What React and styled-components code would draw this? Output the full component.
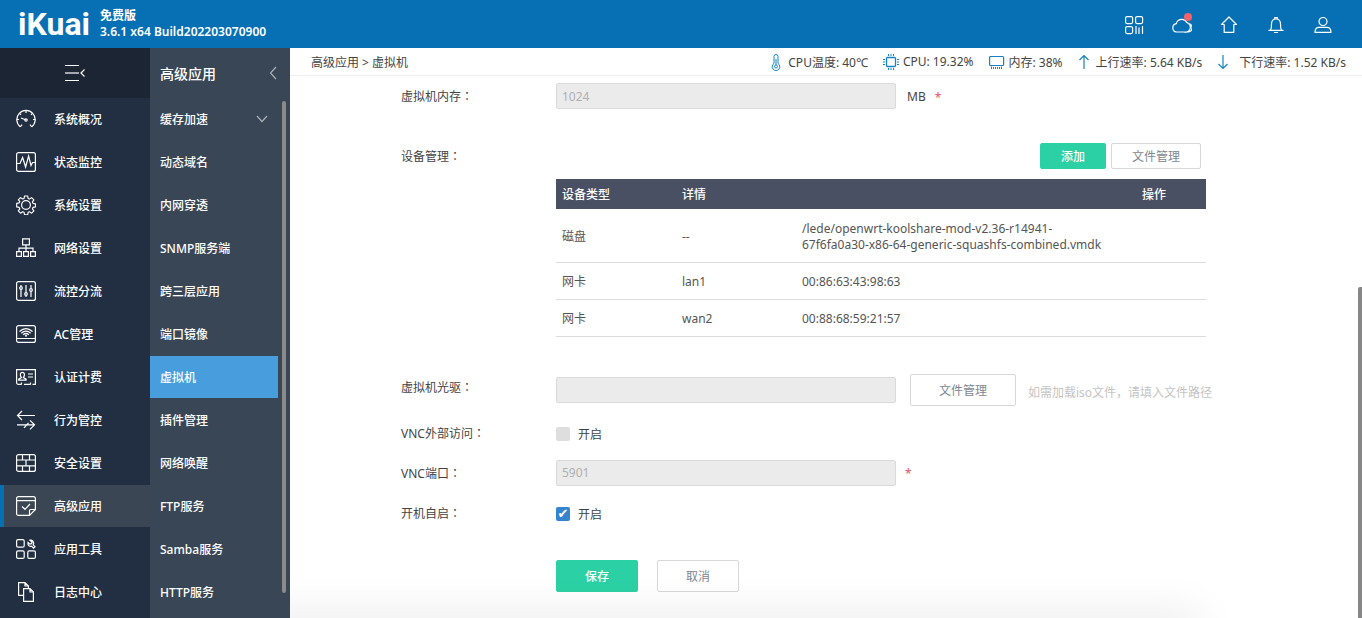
import React from "react";
import styled, { createGlobalStyle } from "styled-components";

const GlobalStyle = createGlobalStyle`
  *, *::before, *::after { box-sizing: border-box; }
  html, body { margin: 0; height: 100%; overflow: hidden; }
  #root { height: 100%; }
  body, button, input {
    font-family: "Noto Sans", "Noto Sans CJK SC", sans-serif;
    font-size: 12px;
    color: #444;
  }
  button { cursor: pointer; }
  a { color: inherit; text-decoration: none; }
`;

const Page = styled.div`
  display: flex;
  flex-direction: column;
  height: 100vh;
  overflow: hidden;
  background: #fff;
`;

const Header = styled.header`
  display: flex;
  align-items: center;
  flex: none;
  height: 48px;
  padding: 0 29px 0 18px;
  background: #0770b5;
  color: #fff;
`;

const Brand = styled.div`
  width: 82px;
  font: 700 32px/48px "Roboto", sans-serif;
`;

const Version = styled.div`
  flex: 1;
  font-size: 12px;
  font-weight: 600;
  line-height: 16px;
`;

const HeaderTools = styled.nav`
  display: flex;
  gap: 27px;
  padding-top: 2px;
`;

const IconButton = styled.button`
  position: relative;
  display: flex;
  padding: 0;
  border: 0;
  background: none;
  color: inherit;
`;

const Dot = styled.span`
  position: absolute;
  top: -2px;
  right: 0;
  width: 8px;
  height: 8px;
  border-radius: 50%;
  background: #f4606c;
`;

const Body = styled.div`
  display: flex;
  flex: 1;
  min-height: 0;
`;

const Sidebar = styled.nav`
  flex: none;
  width: 150px;
  background: #222f42;
  color: #fff;
  overflow: hidden;
`;

const Collapse = styled.button`
  display: flex;
  align-items: center;
  justify-content: center;
  width: 100%;
  height: 50px;
  padding: 0;
  border: 0;
  background: #1b2534;
  color: #fff;
`;

const Menu = styled.ul`
  display: flex;
  flex-direction: column;
  gap: 1px;
  margin: 0;
  padding: 0;
  list-style: none;
`;

const MainLink = styled.a`
  display: flex;
  align-items: center;
  gap: 18px;
  height: 42px;
  padding-left: 12px;
  border-left: 4px solid ${(p) => (p.$active ? "#0770b5" : "transparent")};
  background: ${(p) => (p.$active ? "#3a4654" : "transparent")};
  font-weight: 500;
`;

const SubPanel = styled.nav`
  position: relative;
  flex: none;
  width: 140px;
  background: #394655;
  color: #fff;
  overflow: hidden;
`;

const SubTitle = styled.div`
  display: flex;
  align-items: center;
  justify-content: space-between;
  height: 50px;
  padding: 0 13px 0 10px;
  font-size: 14px;
  font-weight: 500;
`;

const SubLink = styled.a`
  display: flex;
  align-items: center;
  justify-content: space-between;
  height: 42px;
  margin-right: 12px;
  padding: 0 10px;
  background: ${(p) => (p.$active ? "#489edd" : "transparent")};
  font-weight: 500;
`;

const SubScrollThumb = styled.div`
  position: absolute;
  top: 53px;
  right: 4px;
  bottom: 25px;
  width: 4px;
  border-radius: 2px;
  background: #8b8b8b;
`;

const Main = styled.main`
  position: relative;
  display: flex;
  flex-direction: column;
  flex: 1;
  min-width: 0;
  overflow: hidden;
`;

const StatusBar = styled.div`
  display: flex;
  align-items: center;
  justify-content: space-between;
  flex: none;
  height: 28px;
  padding: 0 16px 0 21px;
  border-bottom: 1px solid #efefef;
  white-space: nowrap;
`;

const StatusList = styled.div`
  display: flex;
  gap: 15px;
`;

const StatusItem = styled.span`
  display: flex;
  align-items: center;
  gap: ${(p) => p.$gap}px;
  svg { color: #1583c4; }
`;

const Form = styled.form`
  padding: 7px 0 26px 111px;
`;

const Row = styled.div`
  display: grid;
  grid-template-columns: 155px 1fr;
  margin-bottom: ${(p) => p.$space || 14}px;
`;

const Label = styled.label`
  height: 26px;
  line-height: 26px;
`;

const Colon = styled.span`
  font-family: "Noto Sans CJK TC", sans-serif;
`;

const Field = styled.div`
  display: flex;
  align-items: center;
  min-height: 26px;
`;

const TextInput = styled.input`
  width: 340px;
  height: 26px;
  padding: 0 5px;
  border: 1px solid #dadada;
  border-radius: 2px;
  background: #ebebeb;
  color: #b0b0b0;
`;

const Unit = styled.span`
  margin-left: 11px;
`;

const Star = styled.span`
  margin-left: 9px;
  padding-top: 2px;
  color: #e8525e;
`;

const Hint = styled.span`
  margin-left: 12px;
  padding-top: 4px;
  color: #c4c4c4;
`;

const Button = styled.button`
  width: ${(p) => p.$width}px;
  height: ${(p) => (p.$small ? 26 : 32)}px;
  padding: 0;
  border: 1px solid ${(p) => (p.$primary ? "#2bd1a4" : "#d8d8d8")};
  border-radius: 2px;
  background: ${(p) => (p.$primary ? "#2bd1a4" : "#fff")};
  color: ${(p) => (p.$primary ? "#fff" : "#7d8791")};
  font-weight: ${(p) => (p.$primary ? 500 : 400)};
`;

const FileButton = styled(Button)`
  margin-left: 14px;
`;

const DevicePanel = styled.div`
  width: 650px;
`;

const DeviceTools = styled.div`
  display: flex;
  justify-content: flex-end;
  gap: 5px;
  margin-bottom: 10px;
  padding-right: 5px;
`;

const Table = styled.table`
  width: 100%;
  border-collapse: collapse;
  table-layout: fixed;
  line-height: 16px;
  th, td { padding: 2px 6px 0; text-align: left; }
  th { height: 30px; background: #4a5064; color: #fff; font-weight: 500; }
  td { height: 37px; border-bottom: 1px solid #dcdcdc; color: #555; }
  td:nth-child(3) { padding-right: 22px; }
  tbody tr:first-child td { height: 53px; padding-top: 3px; }
`;

const Col = styled.col`
  width: ${(p) => p.$width}px;
`;

const CheckLabel = styled.label`
  display: flex;
  align-items: center;
  gap: 8px;
  padding-top: 2px;
`;

const CheckBox = styled.input`
  appearance: none;
  display: grid;
  place-items: center;
  width: 14px;
  height: 14px;
  margin: 0;
  border-radius: 2px;
  background: #dedede;
  &:checked { background: #3584cf; }
  &:checked::after {
    content: "✔";
    color: #fff;
    font: 13px/14px "DejaVu Sans", sans-serif;
  }
`;

const Actions = styled.div`
  display: flex;
  gap: 19px;
  margin: 34px 0 0 155px;
`;

const PageScrollThumb = styled.div`
  position: absolute;
  right: 0;
  bottom: 0;
  width: 4px;
  height: 58%;
  border-radius: 2px 0 0 0;
  background: #878787;
`;

const BottomShade = styled.div`
  position: absolute;
  left: -40px;
  right: 162px;
  bottom: -12px;
  height: 12px;
  box-shadow: 0 0 40px rgba(0, 0, 0, 0.18);
  pointer-events: none;
`;

const Icon = ({ w = 20, h = 20, children, ...rest }) => (
  <svg
    width={w}
    height={h}
    viewBox={`0 0 ${w} ${h}`}
    fill="none"
    stroke="currentColor"
    strokeWidth="1.2"
    aria-hidden="true"
    {...rest}
  >
    {children}
  </svg>
);

const icons = {
  gauge: (
    <Icon>
      <path d="M4.200 17.800 6.100 15.600M15.800 17.800 13.900 15.600M4.200 17.800A9.200 9.200 0 1 1 15.800 17.800" />
      <path d="M10 1.500V4M3.600 4.400 5 5.800M16.400 4.400 15 5.800M.8 10.500H3M17 10.500H19.200M5 9 9.400 10.700" />
      <circle cx="10" cy="11" r="1.200" />
    </Icon>
  ),
  monitor: (
    <Icon>
      <rect x=".6" y=".6" width="18.800" height="18.800" rx="2" />
      <path d="M1 11.500H4L6.600 5.500 9.600 15 12.600 4 15 13.500 16.500 10.500H19" />
    </Icon>
  ),
  gear: (
    <Icon strokeLinejoin="round">
      <circle cx="10" cy="10" r="4.400" />
      <path d="M8.4.7h3.2l.5 2.6 1.5.6 2.2-1.5 2.3 2.3-1.5 2.2.6 1.5 2.6.5v3.2l-2.6.5-.6 1.5 1.5 2.2-2.3 2.3-2.2-1.5-1.5.6-.5 2.6H8.4l-.5-2.6-1.5-.6-2.2 1.5-2.3-2.3 1.5-2.2-.6-1.5-2.6-.5V8.400l2.600-.5.6-1.500L1.900 4.700 4.200 2.400 6.400 3.900 7.900 3.300Z" transform="translate(.5 .3) scale(.96)" />
    </Icon>
  ),
  network: (
    <Icon>
      <path d="M6.600.8H13.400V6.800H6.600ZM.6 13.600H5.400V18.400H.6ZM7.600 13.600H12.400V18.400H7.600ZM14.600 13.600H19.400V18.400H14.600ZM10 6.800V13.600M3 13.600V10.200H17V13.600" />
    </Icon>
  ),
  sliders: (
    <Icon>
      <rect x=".6" y=".6" width="18.800" height="18.800" rx="2" />
      <path d="M5 4V5.500M5 8.500V16M10 4V11.500M10 14.500V16M15 4V7.500M15 10.500V16" />
      <circle cx="5" cy="7" r="1.300" />
      <circle cx="10" cy="13" r="1.300" />
      <circle cx="15" cy="9" r="1.300" />
    </Icon>
  ),
  ac: (
    <Icon>
      <rect x=".6" y="1.600" width="18.800" height="16.800" rx="2" />
      <path d="M.6 14.500H19.400M3.500 7.500Q10 1.800 16.500 7.500M5.300 9.200Q10 5 14.700 9.200M7.200 10.800Q10 8.200 12.800 10.800" />
      <circle cx="10" cy="11.800" r="1" fill="currentColor" stroke="none" />
    </Icon>
  ),
  card: (
    <Icon>
      <path d="M5.500 17.400H2.600Q.6 17.400.6 15.400V2.600H19.400V17.400H16.500M5.500 15.500V17.400M14.500 15.500V17.400M8 17.400H14.500M12 7H17M12 10H17" />
      <path d="M2.700 13.200V12.200L5.400 10.600Q4 8.900 4.400 7 4.800 5.400 6.400 5.400 8 5.400 8.400 7 8.700 8.900 7.400 10.600L10.100 12.200V13.200Z" />
    </Icon>
  ),
  behavior: (
    <Icon>
      <path d="M6 1 1.500 5.500 6 10M1.500 5.500H19M1 14.800H18.500M14 10.300 18.500 14.800 14 19.300M8 17.800 12.500 12.800" />
    </Icon>
  ),
  wall: (
    <Icon>
      <rect x=".6" y="1.600" width="18.800" height="16.800" rx="2" />
      <path d="M.6 7H19.400M.6 12.800H19.400M6.500 1.600V7M13.500 1.600V7M10 7V12.800M6.500 12.800V18.400M13.500 12.800V18.400" />
    </Icon>
  ),
  advanced: (
    <Icon>
      <path d="M13.500 19.400H2.600Q.6 19.400.6 17.400V2.600Q.6.6 2.600.6H17.400Q19.400.6 19.400 2.600V13.500L13.500 19.400V14.500Q13.500 13.500 14.500 13.500H19.400M.6 4.600H19.400M6 10.500 9 13.300 14 8" />
    </Icon>
  ),
  tools: (
    <Icon>
      <rect x=".6" y=".6" width="7.600" height="7.600" rx="1.500" />
      <rect x=".6" y="11.800" width="7.600" height="7.600" rx="1.500" />
      <rect x="11.800" y="11.800" width="7.600" height="7.600" rx="1.500" />
      <path d="M14 1.200 16 3 15.500 4.700 13.800 5.200 12 3.500Q11.500 5.800 13.300 7 14.500 7.700 15.600 7.200L17.500 9.200 19 7.700 17.200 5.800Q18.200 3.600 16.800 2 15.700.800 14 1.200Z" />
    </Icon>
  ),
  logs: (
    <Icon>
      <path d="M7 13.400H2.600V.6H9L12.400 4V6M9 .6V4H12.400M7.600 6.600H14L17.400 10V19.400H7.600ZM14 6.600V10H17.400" />
    </Icon>
  ),
};

const mainMenu = [
  ["系统概况", "gauge"],
  ["状态监控", "monitor"],
  ["系统设置", "gear"],
  ["网络设置", "network"],
  ["流控分流", "sliders"],
  ["AC管理", "ac"],
  ["认证计费", "card"],
  ["行为管控", "behavior"],
  ["安全设置", "wall"],
  ["高级应用", "advanced"],
  ["应用工具", "tools"],
  ["日志中心", "logs"],
];

const subMenu = [
  "缓存加速",
  "动态域名",
  "内网穿透",
  "SNMP服务端",
  "跨三层应用",
  "端口镜像",
  "虚拟机",
  "插件管理",
  "网络唤醒",
  "FTP服务",
  "Samba服务",
  "HTTP服务",
];

const devices = [
  ["磁盘", "--", "/lede/openwrt-koolshare-mod-v2.36-r14941-67f6fa0a30-x86-64-generic-squashfs-combined.vmdk"],
  ["网卡", "lan1", "00:86:63:43:98:63"],
  ["网卡", "wan2", "00:88:68:59:21:57"],
];

const statuses = [
  {
    text: "CPU温度: 40℃",
    gap: 6,
    icon: (
      <Icon w={12} h={18} strokeWidth="1">
        <path d="M4 10.500V3.500A2 2 0 0 1 8 3.500V10.500A3.800 3.800 0 1 1 4 10.500ZM6 6V12" />
        <circle cx="6" cy="13.500" r="1.500" />
      </Icon>
    ),
  },
  {
    text: "CPU: 19.32%",
    gap: 4,
    icon: (
      <Icon w={16} h={18} strokeWidth="1">
        <rect x="3.500" y="4.500" width="9" height="9" rx="1" strokeWidth="1.300" />
        <path d="M5.500 1V3M8 1V3M10.500 1V3M5.500 15V17M8 15V17M10.500 15V17M0 6.500H2M0 9H2M0 11.500H2M14 6.500H16M14 9H16M14 11.500H16" />
      </Icon>
    ),
  },
  {
    text: "内存: 38%",
    gap: 4,
    icon: (
      <Icon w={16} h={16} strokeWidth="1">
        <rect x=".600" y="2.500" width="14" height="9" rx="1" strokeWidth="1.200" />
        <path d="M2.500 12.500V15M4.500 13V15M6.500 13V15M8.500 13V15M10.500 13V15M12.500 12.500V15" />
      </Icon>
    ),
  },
  {
    text: "上行速率: 5.64 KB/s",
    gap: 6,
    icon: (
      <Icon w={12} h={16}>
        <path d="M6 15V1.500M1.500 6 6 1.500 10.500 6" />
      </Icon>
    ),
  },
  {
    text: "下行速率: 1.52 KB/s",
    gap: 10,
    icon: (
      <Icon w={12} h={16}>
        <path d="M6 1V14.500M1.500 10 6 14.500 10.500 10" />
      </Icon>
    ),
  },
];

export default function App() {
  return (
    <Page>
      <GlobalStyle />
      <Header>
        <Brand>iKuai</Brand>
        <Version>
          免费版
          <br />
          3.6.1 x64 Build202203070900
        </Version>
        <HeaderTools>
          <IconButton aria-label="应用">
            <Icon>
              <rect x=".6" y="1.600" width="7" height="7" rx="1.500" />
              <rect x="10.600" y="1.600" width="7" height="7" rx="1.500" />
              <rect x=".6" y="11.600" width="7" height="7" rx="1.500" />
              <path d="M11 11V19M14 12.500V19M17.500 11V19" />
            </Icon>
          </IconButton>
          <IconButton aria-label="云">
            <Icon>
              <path d="M4.500 17A4.200 4.200 0 0 1 4.300 8.700 5.600 5.600 0 0 1 14.800 7.500 4.800 4.800 0 0 1 12 17ZM12 17H16A4.300 4.300 0 0 0 16.600 8.500L14.900 7.500" />
            </Icon>
            <Dot />
          </IconButton>
          <IconButton aria-label="首页">
            <Icon>
              <path d="M10 2 17.500 9.500H14.800V17.400H5.200V9.500H2.500Z" strokeLinejoin="round" />
            </Icon>
          </IconButton>
          <IconButton aria-label="通知">
            <Icon>
              <path d="M2.500 15.400H17.500M4.500 15.400Q5.500 13.500 5.500 9 5.500 4 10 4 14.500 4 14.500 9 14.500 13.500 15.500 15.400M8 17.500H12M8.800 4V2.500H11.200V4" />
            </Icon>
          </IconButton>
          <IconButton aria-label="用户">
            <Icon>
              <circle cx="10" cy="6.500" r="4" />
              <path d="M2 17.400Q2 12.400 6 12.400H14Q18 12.400 18 17.400Z" strokeLinejoin="round" />
            </Icon>
          </IconButton>
        </HeaderTools>
      </Header>
      <Body>
        <Sidebar>
          <Collapse aria-label="收起菜单">
            <Icon w={20} h={18}>
              <path d="M0 1.500H14M0 16.500H14" />
              <path d="M0 9H14" stroke="#a4a8ae" strokeWidth="2" />
              <path d="M19.500 5.500 16 9 19.500 12.500" />
            </Icon>
          </Collapse>
          <Menu>
            {mainMenu.map(([name, icon]) => (
              <li key={name}>
                <MainLink href="#" $active={icon === "advanced"}>
                  {icons[icon]}
                  {name}
                </MainLink>
              </li>
            ))}
          </Menu>
        </Sidebar>
        <SubPanel>
          <SubTitle>
            高级应用
            <Icon w={8} h={14} stroke="#a9b0b8">
              <path d="M7 1 1.500 7 7 13" />
            </Icon>
          </SubTitle>
          <Menu>
            {subMenu.map((name) => (
              <li key={name}>
                <SubLink href="#" $active={name === "虚拟机"}>
                  {name}
                  {name === "缓存加速" && (
                    <Icon w={12} h={8} stroke="#a9b0b8">
                      <path d="M1 1 6 6.500 11 1" />
                    </Icon>
                  )}
                </SubLink>
              </li>
            ))}
          </Menu>
          <SubScrollThumb />
        </SubPanel>
        <Main>
          <StatusBar>
            <span>高级应用 &gt; 虚拟机</span>
            <StatusList>
              {statuses.map((s) => (
                <StatusItem key={s.text} $gap={s.gap}>
                  {s.icon}
                  {s.text}
                </StatusItem>
              ))}
            </StatusList>
          </StatusBar>
          <Form onSubmit={(e) => e.preventDefault()}>
            <Row $space={34}>
              <Label htmlFor="memory">虚拟机内存<Colon>：</Colon></Label>
              <Field>
                <TextInput id="memory" defaultValue="1024" disabled />
                <Unit>MB</Unit>
                <Star>*</Star>
              </Field>
            </Row>
            <Row $space={37}>
              <Label as="span">设备管理<Colon>：</Colon></Label>
              <DevicePanel>
                <DeviceTools>
                  <Button type="button" $primary $small $width={66}>添加</Button>
                  <Button type="button" $small $width={90}>文件管理</Button>
                </DeviceTools>
                <Table>
                  <colgroup>
                    <Col $width={120} />
                    <Col $width={120} />
                    <Col $width={340} />
                    <Col $width={70} />
                  </colgroup>
                  <thead>
                    <tr>
                      <th>设备类型</th>
                      <th>详情</th>
                      <th></th>
                      <th>操作</th>
                    </tr>
                  </thead>
                  <tbody>
                    {devices.map((d) => (
                      <tr key={d[2]}>
                        <td>{d[0]}</td>
                        <td>{d[1]}</td>
                        <td>{d[2]}</td>
                        <td></td>
                      </tr>
                    ))}
                  </tbody>
                </Table>
              </DevicePanel>
            </Row>
            <Row>
              <Label htmlFor="drive">虚拟机光驱<Colon>：</Colon></Label>
              <Field>
                <TextInput id="drive" disabled />
                <FileButton type="button" $width={106}>文件管理</FileButton>
                <Hint>如需加载iso文件，请填入文件路径</Hint>
              </Field>
            </Row>
            <Row>
              <Label htmlFor="external">VNC外部访问<Colon>：</Colon></Label>
              <Field>
                <CheckLabel>
                  <CheckBox id="external" type="checkbox" disabled />
                  开启
                </CheckLabel>
              </Field>
            </Row>
            <Row>
              <Label htmlFor="port">VNC端口<Colon>：</Colon></Label>
              <Field>
                <TextInput id="port" defaultValue="5901" disabled />
                <Star>*</Star>
              </Field>
            </Row>
            <Row>
              <Label htmlFor="autostart">开机自启<Colon>：</Colon></Label>
              <Field>
                <CheckLabel>
                  <CheckBox id="autostart" type="checkbox" defaultChecked />
                  开启
                </CheckLabel>
              </Field>
            </Row>
            <Actions>
              <Button type="submit" $primary $width={82}>保存</Button>
              <Button type="button" $width={82}>取消</Button>
            </Actions>
          </Form>
          <BottomShade />
          <PageScrollThumb />
        </Main>
      </Body>
    </Page>
  );
}
